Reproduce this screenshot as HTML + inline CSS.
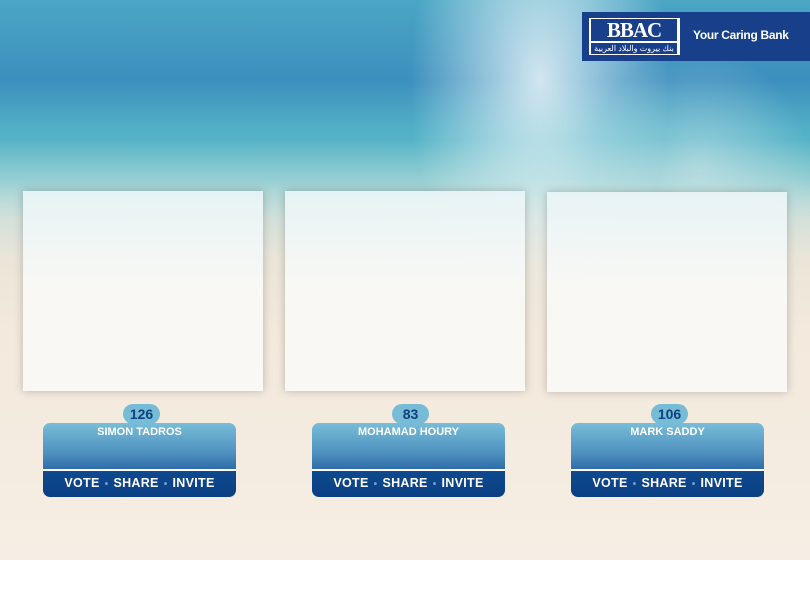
<!DOCTYPE html>
<html><head><meta charset="utf-8"><style>
*{margin:0;padding:0;box-sizing:border-box}
body{width:810px;height:600px;overflow:hidden;background:#fff;font-family:"Liberation Sans",sans-serif;position:relative}
#bg{position:absolute;left:0;top:0;width:810px;height:560px;
background:
radial-gradient(ellipse 130px 240px at 540px 80px,rgba(235,245,248,.85),rgba(235,245,248,0)),
radial-gradient(ellipse 110px 120px at 700px 170px,rgba(220,235,238,.5),rgba(220,235,238,0)),
linear-gradient(180deg,rgba(0,0,0,0) 0px,rgba(0,0,0,0) 140px,rgba(225,232,225,.55) 200px,rgba(238,230,216,.95) 260px,#f3e9dc 330px,#f6eee4 560px),
linear-gradient(180deg,#4aa6c4 0px,#3c8fbe 80px,#52b0c6 130px,#69c0ca 180px,#a8d2d2 220px),
#5ab4c8;}
.logo{position:absolute;left:582px;top:12px;width:228px;height:49px;background:#173f8a}
.logo .box{position:absolute;left:6px;top:5px;width:93px;height:39px;background:#fff;border:1px solid #173f8a}
.logo .box .b{position:absolute;left:2px;top:1px;width:86px;height:22px;background:#173f8a;color:#fff;font:bold 21px "Liberation Serif",serif;line-height:22px;text-align:center;letter-spacing:-1px}
.logo .box .a{position:absolute;left:2px;top:25px;width:86px;height:11px;background:#173f8a;color:#fff;font-size:8px;line-height:11px;text-align:center}
.logo .t{position:absolute;left:111px;top:16px;color:#fff;font-weight:bold;font-size:12px;letter-spacing:-.3px}
.ph{position:absolute;top:191px;width:240px;height:200px;background:linear-gradient(180deg,rgba(232,244,246,.95),rgba(250,249,246,.96) 50%,rgba(250,249,246,.96));box-shadow:0 0 8px rgba(80,80,80,.35)}
.cnt{position:absolute;top:404px;width:37px;height:20px;border-radius:10px;background:#76bcd6;color:#0f3f7f;font-weight:bold;font-size:14px;text-align:center;line-height:21px}
.card{position:absolute;top:423px;width:193px;height:74px;border-radius:7px;overflow:hidden;background:linear-gradient(180deg,#78bdd8 0%,#4f91bf 40%,#2e6ba8 63%,#0f4a8e 64%,#0b3f84 100%)}
.card .n{position:absolute;top:3px;width:100%;text-align:center;color:#fff;font-weight:bold;font-size:11px}
.card .l{position:absolute;top:46px;width:100%;height:2px;background:#fff}
.card .a{position:absolute;top:53px;width:100%;text-align:center;color:#fff;font-weight:bold;font-size:12.5px;letter-spacing:.3px;word-spacing:1px}
.card .a i{color:#6aa9d6;font-style:normal;font-size:10px;margin:0 5px}
</style></head><body>
<div id="bg"></div>
<div class="logo"><div class="box"><div class="b">BBAC</div><div class="a">بنك بيروت والبلاد العربية</div></div><div class="t">Your Caring Bank</div></div>
<div class="ph" style="left:23px"></div>
<div class="ph" style="left:285px"></div>
<div class="ph" style="left:547px;top:192px"></div>
<div class="cnt" style="left:123px">126</div>
<div class="cnt" style="left:392px">83</div>
<div class="cnt" style="left:651px">106</div>
<div class="card" style="left:43px"><div class="n">SIMON TADROS</div><div class="l"></div><div class="a">VOTE<i>•</i>SHARE<i>•</i>INVITE</div></div>
<div class="card" style="left:312px"><div class="n">MOHAMAD HOURY</div><div class="l"></div><div class="a">VOTE<i>•</i>SHARE<i>•</i>INVITE</div></div>
<div class="card" style="left:571px"><div class="n">MARK SADDY</div><div class="l"></div><div class="a">VOTE<i>•</i>SHARE<i>•</i>INVITE</div></div>
</body></html>
